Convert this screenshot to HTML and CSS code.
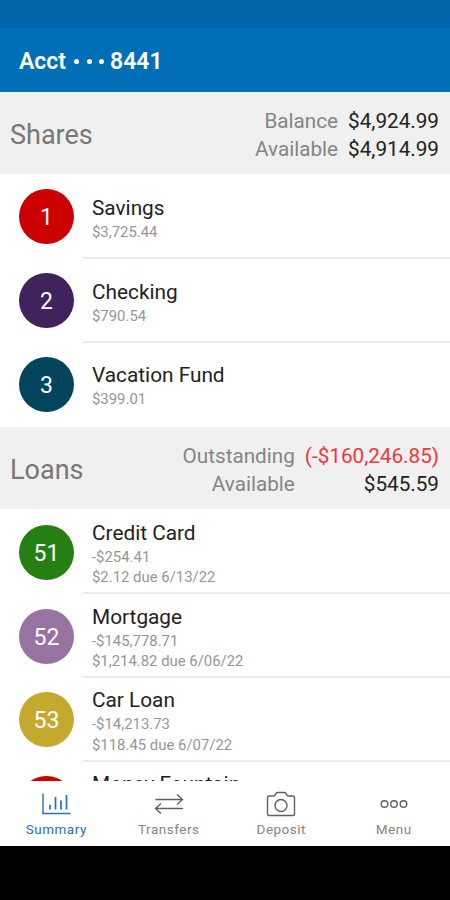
FILE: index.html
```html
<!DOCTYPE html>
<html lang="en">
<head>
    <meta charset="UTF-8">
    <meta name="viewport" content="width=device-width, initial-scale=1.0">
    <title>Account Summary</title>
    <link rel="stylesheet" href="styles.css">
</head>
<body>
    <div class="status-bar"></div>
    <header class="app-header">
        <h1><span>Acct</span><span class="dots"><i></i><i></i><i></i></span><span>8441</span></h1>
    </header>

    <main class="content">
        <div class="section-header">
            <h2>Shares</h2>
            <div class="totals">
                <span class="label">Balance</span><span class="value">$4,924.99</span>
                <span class="label">Available</span><span class="value">$4,914.99</span>
            </div>
        </div>
        <ul class="accounts">
            <li>
                <div class="badge red">1</div>
                <div class="info"><h3>Savings</h3><p>$3,725.44</p></div>
            </li>
            <li>
                <div class="badge purple">2</div>
                <div class="info"><h3>Checking</h3><p>$790.54</p></div>
            </li>
            <li>
                <div class="badge navy">3</div>
                <div class="info"><h3>Vacation Fund</h3><p>$399.01</p></div>
            </li>
        </ul>

        <div class="section-header">
            <h2>Loans</h2>
            <div class="totals">
                <span class="label">Outstanding</span><span class="value negative">(-$160,246.85)</span>
                <span class="label">Available</span><span class="value">$545.59</span>
            </div>
        </div>
        <ul class="accounts">
            <li>
                <div class="badge green">51</div>
                <div class="info"><h3>Credit Card</h3><p>-$254.41</p><p>$2.12 due 6/13/22</p></div>
            </li>
            <li>
                <div class="badge lilac">52</div>
                <div class="info"><h3>Mortgage</h3><p>-$145,778.71</p><p>$1,214.82 due 6/06/22</p></div>
            </li>
            <li>
                <div class="badge gold">53</div>
                <div class="info"><h3>Car Loan</h3><p>-$14,213.73</p><p>$118.45 due 6/07/22</p></div>
            </li>
            <li>
                <div class="badge red"></div>
                <div class="info"><h3>Money Fountain</h3><p></p><p></p></div>
            </li>
        </ul>
    </main>

    <nav class="tab-bar">
        <a class="tab active">
            <svg width="30" height="26" viewBox="0 0 30 26">
                <path d="M2 2.500V22.500H29.500"/>
                <path d="M9 18.500V14M14.500 18.500V6M20 18.500V9.500M25.500 18.500V4" stroke-width="1.700"/>
            </svg>
            <span>Summary</span>
        </a>
        <a class="tab">
            <svg width="30" height="26" viewBox="0 0 30 26">
                <path d="M1.500 8.500H28M23 3.500L28.500 8.500L23 13.500M29 17.500H2M7 12.500L1.500 17.500L7 22.500"/>
            </svg>
            <span>Transfers</span>
        </a>
        <a class="tab">
            <svg width="30" height="26" viewBox="0 0 30 26">
                <path d="M3 5H7.500Q9 5 9.500 3.500Q10.200 1.500 11.500 1.500H18.500Q19.800 1.500 20.500 3.500Q21 5 22.500 5H27Q28.500 5 28.500 6.500V23Q28.500 24.500 27 24.500H3Q1.500 24.500 1.500 23V6.500Q1.500 5 3 5Z"/>
                <circle cx="15" cy="14.500" r="6"/>
            </svg>
            <span>Deposit</span>
        </a>
        <a class="tab">
            <svg width="30" height="26" viewBox="0 0 30 26">
                <circle cx="5.500" cy="13" r="3.300"/>
                <circle cx="15" cy="13" r="3.300"/>
                <circle cx="24.500" cy="13" r="3.300"/>
            </svg>
            <span>Menu</span>
        </a>
    </nav>
    <div class="system-bar"></div>
</body>
</html>
```
FILE: styles.css
```css
* {
    box-sizing: border-box;
    margin: 0;
    padding: 0;
}
body {
    display: flex;
    flex-direction: column;
    height: 900px;
    background-color: #fff;
    color: #222;
    font-family: Roboto, "Liberation Sans", sans-serif;
    overflow: hidden;
}
.status-bar {
    flex: none;
    height: 28px;
    background-color: #0065aa;
}
.app-header {
    flex: none;
    display: flex;
    align-items: center;
    height: 64px;
    padding: 3px 19px 0;
    background-color: #006fb7;
    color: #fff;
}
.app-header h1 {
    display: flex;
    align-items: center;
    font-size: 23px;
    font-weight: 600;
}
.dots {
    display: flex;
    gap: 7.500px;
    padding: 0 6px 0 8px;
}
.dots i {
    width: 5px;
    height: 5px;
    border-radius: 50%;
    background-color: #fff;
}
.content {
    flex: none;
    height: 689px;
    overflow: hidden;
}
.section-header {
    display: flex;
    justify-content: space-between;
    align-items: center;
    height: 82px;
    padding: 3px 11px 0 10px;
    background-color: #f0f0f0;
}
.section-header h2 {
    font-size: 27px;
    font-weight: 400;
    color: #777;
}
.totals {
    display: grid;
    grid-template-columns: auto auto;
    column-gap: 10px;
    font-size: 20.700px;
    line-height: 28px;
    text-align: right;
}
.label {
    color: #858585;
}
.negative {
    color: #f53535;
}
.accounts {
    list-style: none;
    padding: 1.100px 0 0.900px;
}
.accounts li {
    display: flex;
    align-items: center;
    height: 83.800px;
    padding-left: 19px;
}
.accounts li:last-child .info {
    border-color: transparent;
}
.badge {
    flex: none;
    width: 55px;
    height: 55px;
    margin-right: 9px;
    border-radius: 50%;
    color: #fff;
    font-size: 23px;
    line-height: 57px;
    text-align: center;
}
.red { background-color: #cc0000; }
.purple { background-color: #3e235c; }
.navy { background-color: #04445e; }
.green { background-color: #267f12; }
.lilac { background-color: #9673a1; }
.gold { background-color: #c5a92f; }
.info {
    flex: 1;
    display: flex;
    flex-direction: column;
    justify-content: center;
    height: 100%;
    padding: 5px 0 0 9px;
    border-bottom: 2px solid #ebebeb;
}
.info h3 {
    font-size: 20.800px;
    font-weight: 400;
    line-height: 27px;
}
.info p {
    height: 20.500px;
    font-size: 14.900px;
    line-height: 21px;
    color: #969696;
}
.tab-bar {
    flex: none;
    display: grid;
    grid-template-columns: repeat(4, 1fr);
    height: 65px;
    padding-top: 10px;
    background-color: #fff;
}
.tab {
    display: flex;
    flex-direction: column;
    align-items: center;
    color: #858585;
    font-size: 13.500px;
    line-height: 16px;
    letter-spacing: 0.500px;
}
.tab svg {
    margin-bottom: 4px;
    fill: none;
    stroke: #606060;
    stroke-width: 1.400;
}
.active {
    color: #2c6cb8;
}
.active svg {
    stroke: #2c6cb8;
}
.system-bar {
    flex: 1;
    background-color: #000;
}
```
